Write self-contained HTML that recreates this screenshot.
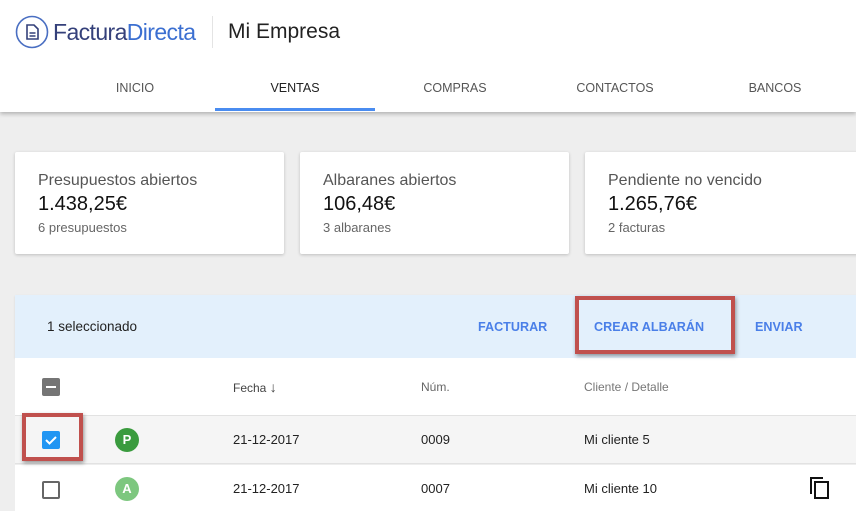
<!DOCTYPE html>
<html><head><meta charset="utf-8"><style>
*{margin:0;padding:0;box-sizing:border-box}
body{width:856px;height:511px;overflow:hidden;background:#eeeeee;font-family:"Liberation Sans",Arial,sans-serif;position:relative;color:#212121}
.a{position:absolute}
.hdr{left:0;top:0;width:856px;height:112px;background:#fff;box-shadow:0 2px 4px rgba(0,0,0,.25)}
.tab{top:81px;font-size:12.5px;color:#555;width:160px;text-align:center}
.card{top:152px;height:102px;background:#fff;box-shadow:0 1px 3px rgba(0,0,0,.2);border-radius:2px;padding:20px 23px}
.card .t{font-size:16px;color:#555}
.card .v{font-size:20px;color:#111;margin-top:3px}
.card .s{font-size:13px;color:#666;margin-top:4px}
.btn{top:320px;font-size:12.6px;color:#4a7fe8;font-weight:bold}
.cell{font-size:13px;color:#222}
.red{border:4px solid #c0504d;box-shadow:1px 2px 4px rgba(0,0,0,.4)}
</style></head><body>
<div class="a hdr"></div>
<svg class="a" style="left:15px;top:15px" width="34" height="34" viewBox="0 0 34 34"><circle cx="17" cy="17" r="15.5" fill="none" stroke="#4a6fc2" stroke-width="1.6"/><path d="M12 10h7l4 4v10h-11z" fill="none" stroke="#34407a" stroke-width="1.6"/><path d="M14.5 18h6M14.5 21h6" stroke="#34407a" stroke-width="1.4"/></svg>
<div class="a" style="left:53px;top:19px;font-size:23px;letter-spacing:-0.6px;color:#34407a">Factura<span style="color:#3b6fd1">Directa</span></div>
<div class="a" style="left:212px;top:16px;width:1px;height:32px;background:#e4e4e4"></div>
<div class="a" style="left:228px;top:20px;font-size:21px;color:#222">Mi Empresa</div>
<div class="a tab" style="left:55px">INICIO</div>
<div class="a tab" style="left:215px;color:#222">VENTAS</div>
<div class="a" style="left:215px;top:108px;width:160px;height:3px;background:#4a8cf0"></div>
<div class="a tab" style="left:375px">COMPRAS</div>
<div class="a tab" style="left:535px">CONTACTOS</div>
<div class="a tab" style="left:695px">BANCOS</div>

<div class="a card" style="left:15px;width:269px"><div class="t">Presupuestos abiertos</div><div class="v">1.438,25€</div><div class="s">6 presupuestos</div></div>
<div class="a card" style="left:300px;width:269px"><div class="t">Albaranes abiertos</div><div class="v">106,48€</div><div class="s">3 albaranes</div></div>
<div class="a card" style="left:585px;width:280px"><div class="t">Pendiente no vencido</div><div class="v">1.265,76€</div><div class="s">2 facturas</div></div>

<div class="a" style="left:15px;top:295px;width:850px;height:63px;background:#e3f0fc;box-shadow:0 1px 2px rgba(0,0,0,.1)"></div>
<div class="a" style="left:15px;top:358px;width:850px;height:57px;background:#fff"></div>
<div class="a" style="left:15px;top:415px;width:850px;height:49px;background:#f5f5f5;border-top:1px solid #e2e2e2;border-bottom:1px solid #e2e2e2"></div>
<div class="a" style="left:15px;top:465px;width:850px;height:46px;background:#fff"></div>

<div class="a" style="left:47px;top:319px;font-size:13.5px;color:#222">1 seleccionado</div>
<div class="a btn" style="left:478px">FACTURAR</div>
<div class="a btn" style="left:594px">CREAR ALBARÁN</div>
<div class="a btn" style="left:755px">ENVIAR</div>
<div class="a red" style="left:575px;top:296px;width:160px;height:58px"></div>

<div class="a" style="left:42px;top:378px;width:18px;height:18px;background:#757575;border-radius:2px"><div style="position:absolute;left:4px;top:8px;width:10px;height:2px;background:#fff"></div></div>
<div class="a" style="left:233px;top:379px;font-size:12px;color:#444">Fecha <span style="font-size:14px">&#8595;</span></div>
<div class="a" style="left:421px;top:380px;font-size:12px;color:#666">Núm.</div>
<div class="a" style="left:584px;top:380px;font-size:12px;color:#777">Cliente / Detalle</div>

<div class="a red" style="left:22px;top:413px;width:61px;height:48px"></div>
<div class="a" style="left:42px;top:431px;width:18px;height:18px;background:#2196f3;border-radius:2px"><svg width="18" height="18"><path d="M4 9l3.5 3.5L14 6" fill="none" stroke="#fff" stroke-width="2"/></svg></div>
<div class="a" style="left:115px;top:428px;width:24px;height:24px;border-radius:50%;background:#3a9b3e;color:#fff;font-weight:bold;font-size:13px;text-align:center;line-height:24px">P</div>
<div class="a cell" style="left:233px;top:432px">21-12-2017</div>
<div class="a cell" style="left:421px;top:432px">0009</div>
<div class="a cell" style="left:584px;top:432px">Mi cliente 5</div>

<div class="a" style="left:42px;top:481px;width:18px;height:18px;border:2px solid #666;border-radius:2px;background:#fff"></div>
<div class="a" style="left:115px;top:477px;width:24px;height:24px;border-radius:50%;background:#7dc77f;color:#fff;font-weight:bold;font-size:13px;text-align:center;line-height:24px">A</div>
<div class="a cell" style="left:233px;top:481px">21-12-2017</div>
<div class="a cell" style="left:421px;top:481px">0007</div>
<div class="a cell" style="left:584px;top:481px">Mi cliente 10</div>
<svg class="a" style="left:808px;top:475px" width="24" height="26" viewBox="0 0 24 26"><path d="M3 19V3h12" fill="none" stroke="#111" stroke-width="2"/><rect x="7" y="7" width="13" height="16" fill="none" stroke="#111" stroke-width="2"/></svg>
</body></html>
